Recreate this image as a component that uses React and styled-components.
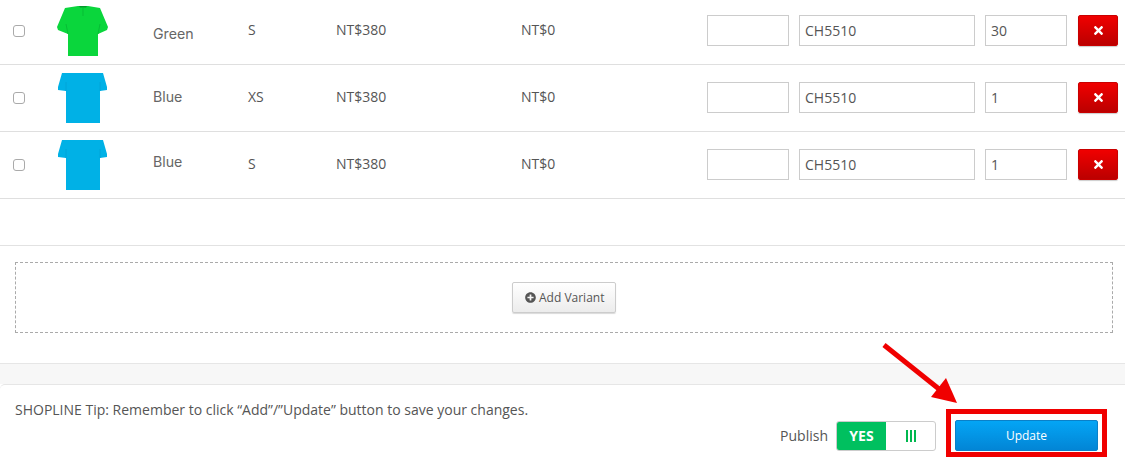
import React from "react";
import styled, { createGlobalStyle } from "styled-components";
import { FaTimes, FaPlusCircle } from "react-icons/fa";

const Global = createGlobalStyle`
  html, body { margin: 0; padding: 0; background: #fff; }
  body { font-family: "Open Sans", "Liberation Sans", sans-serif; color: #555; }
`;
const Page = styled.div`
  position: relative;
  width: 1125px;
  height: 459px;
  overflow: hidden;
  background: #fff;
`;
const Table = styled.div`
  margin-top: -2px;
  height: 247px;
  border-bottom: 1px solid #e2e2e2;
`;
const Row = styled.div`
  display: grid;
  grid-template-columns: 44px 96px 95px 88px 185px 186px 92px 186px 93px 40px;
  align-items: center;
  height: 66px;
  padding-left: 13px;
  border-bottom: 1px solid #dfdfdf;
  font-size: 14px;
`;
const Check = styled.input.attrs({ type: "checkbox" })`
  appearance: none;
  width: 12px;
  height: 12px;
  margin: 0;
  border: 1px solid #aaa;
  border-radius: 3px;
  background: #fff;
`;
const Tee = styled.svg`
  display: block;
  width: 51px;
  height: 50px;
`;
const ColorName = styled.div`
  font-family: "Inter", "Liberation Sans", sans-serif;
  font-size: 14.2px;
  color: #666;
  padding-top: ${(p) => p.$down}px;
  padding-bottom: ${(p) => p.$up}px;
`;
const Cell = styled.div`
  color: #555;
  padding-bottom: 4px;
`;
const Field = styled.input`
  box-sizing: border-box;
  width: ${(p) => p.$w}px;
  height: 31px;
  margin-bottom: 2px;
  padding: 0 5px;
  border: 1px solid #ccc;
  background: #fff;
  font: 14px "Open Sans", sans-serif;
  color: #555;
  outline: none;
`;
const DeleteBtn = styled.button`
  display: flex;
  align-items: center;
  justify-content: center;
  width: 40px;
  height: 31px;
  margin-bottom: 2px;
  padding: 0;
  border: 1px solid #c90000;
  border-radius: 2px;
  background: linear-gradient(#f00000, #bb0000);
  box-shadow: 0 1px 1px rgba(0, 0, 0, 0.2);
  color: #fff;
  font-size: 13px;
`;
const AddArea = styled.div`
  display: flex;
  align-items: center;
  justify-content: center;
  box-sizing: border-box;
  height: 71px;
  margin: 16px 12px 0 15px;
  border: 1px dashed #aaa;
`;
const AddBtn = styled.button`
  display: flex;
  align-items: center;
  gap: 3px;
  box-sizing: border-box;
  width: 104px;
  height: 31px;
  margin-bottom: 1px;
  padding: 0 0 0 12px;
  border: 1px solid #ccc;
  border-radius: 2px;
  background: linear-gradient(#fff, #ececec);
  box-shadow: 0 1px 1px rgba(0, 0, 0, 0.15);
  font: 12px "Open Sans", sans-serif;
  color: #555;
  white-space: nowrap;
`;
const Band = styled.div`
  height: 20px;
  margin-top: 30px;
  border-top: 1px solid #e6e6e6;
  background: #f7f7f7;
`;
const Footer = styled.div`
  position: relative;
  box-sizing: border-box;
  height: 75px;
  padding: 16px 27px 0 15px;
  border-top: 1px solid #e6e6e6;
  border-radius: 5px 0 0 0;
  background: #fff;
`;
const Tip = styled.div`
  font-size: 14px;
  line-height: 18px;
  color: #555;
`;
const Actions = styled.div`
  display: flex;
  justify-content: flex-end;
  align-items: center;
  margin-top: 1px;
`;
const PublishLabel = styled.span`
  font-size: 14px;
  margin-right: 8px;
  color: #555;
`;
const Toggle = styled.div`
  display: flex;
  box-sizing: border-box;
  width: 100px;
  height: 30px;
  margin-right: 19px;
  border: 1px solid #ccc;
  border-radius: 3px;
  overflow: hidden;
`;
const ToggleOn = styled.div`
  display: flex;
  align-items: center;
  justify-content: center;
  width: 49px;
  background: #00c05f;
  color: #fff;
  font-weight: 700;
  font-size: 14px;
`;
const ToggleOff = styled.div`
  display: flex;
  flex: 1;
  align-items: center;
  justify-content: center;
  gap: 2px;
`;
const Tick = styled.i`
  display: block;
  width: 2px;
  height: 12px;
  background: #00b84f;
`;
const UpdateBtn = styled.button`
  width: 143px;
  height: 31px;
  border: 1px solid #0a80c8;
  border-radius: 2px;
  background: linear-gradient(#04a5f5, #0285d5);
  color: #fff;
  font: 12px "Open Sans", sans-serif;
`;
const RedBox = styled.div`
  position: absolute;
  left: 946px;
  top: 24px;
  box-sizing: border-box;
  width: 161px;
  height: 48px;
  border: 5px solid #f00000;
`;
const Arrow = styled.svg`
  position: absolute;
  left: 875px;
  top: 335px;
`;

const BLUE = "#00b1e6";
const GREEN = "#0ad63c";

function Shirt({ color, collar }) {
  return (
    <Tee viewBox="0 0 51 50">
      {collar ? (
        <path fill={color} d="M8 2 L21 0 H31 L43 2 L51 21 L50 24 L41 28 V50 H11 V28 L1 24 L0 21 Z" />
      ) : (
        <path fill={color} d="M5 0 H46 L50 14 V17 L43 18 V50 H9 V18 L1 17 V14 Z" />
      )}
      {collar && (
        <g>
          <path fill="#049a2c" d="M22 0 H30 L29 1.5 H23 Z" />
          <path fill="none" stroke="#07bd35" strokeWidth="1" d="M26 2 V10 M11 28 L9 18 M41 28 L43 18" />
        </g>
      )}
      {!collar && <path fill="none" stroke="#00a4d8" strokeWidth="1" d="M9 18 V9 M43 18 V9" />}
    </Tee>
  );
}

const rows = [
  { color: GREEN, collar: true, name: "Green", size: "S", qty: "30", down: 4, up: 0 },
  { color: BLUE, name: "Blue", size: "XS", qty: "1", down: 0, up: 4 },
  { color: BLUE, name: "Blue", size: "S", qty: "1", down: 0, up: 8 },
];

export default function App() {
  return (
    <Page>
      <Global />
      <Table>
        {rows.map((r, i) => (
          <Row key={i}>
            <Check />
            <Shirt color={r.color} collar={r.collar} />
            <ColorName $down={r.down} $up={r.up}>{r.name}</ColorName>
            <Cell>{r.size}</Cell>
            <Cell>NT$380</Cell>
            <Cell>NT$0</Cell>
            <Field $w={82} defaultValue="" />
            <Field $w={176} defaultValue="CH5510" />
            <Field $w={82} defaultValue={r.qty} />
            <DeleteBtn><FaTimes /></DeleteBtn>
          </Row>
        ))}
      </Table>
      <AddArea>
        <AddBtn><FaPlusCircle size={11} />Add Variant</AddBtn>
      </AddArea>
      <Band />
      <Footer>
        <Tip>SHOPLINE Tip: Remember to click “Add”/”Update” button to save your changes.</Tip>
        <Actions>
          <PublishLabel>Publish</PublishLabel>
          <Toggle>
            <ToggleOn>YES</ToggleOn>
            <ToggleOff><Tick /><Tick /><Tick /></ToggleOff>
          </Toggle>
          <UpdateBtn>Update</UpdateBtn>
        </Actions>
        <RedBox />
      </Footer>
      <Arrow width="90" height="80" viewBox="0 0 90 80">
        <path d="M9 10 L64 54" stroke="#f00000" strokeWidth="5" fill="none" />
        <path d="M71 43 L82 68 L56 62 Z" fill="#f00000" />
      </Arrow>
    </Page>
  );
}
